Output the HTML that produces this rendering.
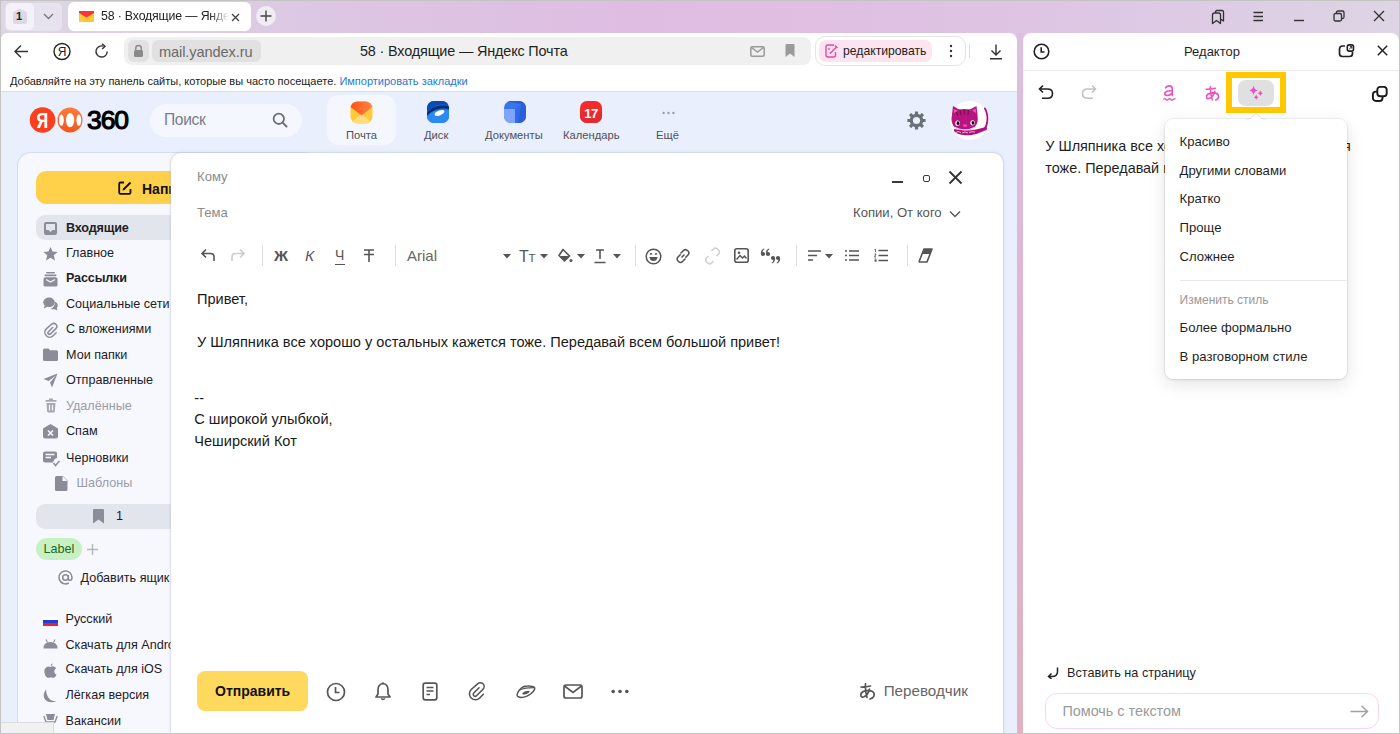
<!DOCTYPE html>
<html><head><meta charset="utf-8">
<style>
*{margin:0;padding:0;box-sizing:border-box}
html,body{width:1400px;height:734px;overflow:hidden}
body{position:relative;font-family:"Liberation Sans",sans-serif;color:#1f1f1f;
background:linear-gradient(90deg,#ddd6e6 0%,#dcc6e2 25%,#dfbde2 45%,#dfbfe2 60%,#ddcbe4 85%,#ddd5e5 100%)}
.a{position:absolute}
svg{display:block}
.t{position:absolute;white-space:nowrap;line-height:1}
</style></head><body>
<!-- outer borders -->
<div class="a" style="left:0;top:0;width:1400px;height:1px;background:#c4c4c4;z-index:50"></div>
<div class="a" style="left:0;top:0;width:1px;height:734px;background:#c4c4c4;z-index:50"></div>
<div class="a" style="left:1399px;top:0;width:1px;height:734px;background:#c6c6c6;z-index:50"></div>
<div class="a" style="left:0;top:733px;width:1400px;height:1px;background:#c6c6c6;z-index:50"></div>

<!-- TAB BAR -->
<div id="tabbar">
 <div class="a" style="left:5px;top:3px;width:57px;height:28px;background:#e7e3ee;border-radius:5px"></div>
 <div class="a" style="left:6px;top:3px;width:28px;height:27px;background:#f4f2f8;border-radius:5px"></div>
 <svg class="a" style="left:12px;top:8px" width="16" height="17" viewBox="0 0 16 17"><path d="M8 0.5 L15 4.5 V14 Q15 16 13 16 H3 Q1 16 1 14 V4.5 Z" fill="#dcd8e4"/></svg>
 <div class="t" style="left:16px;top:11px;font-size:11px;font-weight:700;color:#222">1</div>
 <svg class="a" style="left:43px;top:13px" width="11" height="7" viewBox="0 0 11 7"><path d="M1 1 L5.5 5.5 L10 1" fill="none" stroke="#777" stroke-width="1.3"/></svg>
 <div class="a" style="left:68px;top:2px;width:183px;height:29px;background:#fff;border-radius:6px"></div>
 <svg class="a" style="left:79px;top:11px" width="15" height="12" viewBox="0 0 15 12"><rect x="0" y="0" width="15" height="11" fill="#fdc93a"/><path d="M0 0 H15 V2 L7.5 6.5 L0 2 Z" fill="#f33"/></svg>
 <div class="t" style="left:101px;top:10px;font-size:12.3px;letter-spacing:-0.15px;color:#222;width:128px;overflow:hidden;-webkit-mask-image:linear-gradient(90deg,#000 85%,transparent)">58 · Входящие — Яндекс Почта</div>
 <svg class="a" style="left:231px;top:13px" width="9" height="9" viewBox="0 0 9 9"><path d="M1 1 L8 8 M8 1 L1 8" stroke="#444" stroke-width="1.3"/></svg>
 <div class="a" style="left:256px;top:6px;width:20px;height:20px;background:#f1ecf4;border-radius:50%"></div>
 <svg class="a" style="left:260px;top:10px" width="12" height="12" viewBox="0 0 12 12"><path d="M6 0.5 V11.5 M0.5 6 H11.5" stroke="#444" stroke-width="1.4"/></svg>
 <!-- window controls -->
 <svg class="a" style="left:1210px;top:9px" width="16" height="16" viewBox="0 0 16 16"><path d="M2.5 14.5 V6 Q2.5 4 4.5 4 H8.5 Q10.5 4 10.5 6 V14.5 L6.5 11.5 Z M5.5 4 V3 Q5.5 1.5 7 1.5 H12 Q13.5 1.5 13.5 3 V12 L10.5 10" fill="none" stroke="#333" stroke-width="1.3" stroke-linejoin="round"/></svg>
 <svg class="a" style="left:1253px;top:11px" width="11" height="11" viewBox="0 0 11 11"><path d="M0.5 1.5 H10 M0.5 5.5 H10 M0.5 9.5 H10" stroke="#333" stroke-width="1.3"/></svg>
 <svg class="a" style="left:1293px;top:19px" width="12" height="3" viewBox="0 0 12 3"><path d="M1 1.5 H11" stroke="#333" stroke-width="1.4"/></svg>
 <svg class="a" style="left:1333px;top:10px" width="12" height="12" viewBox="0 0 12 12"><rect x="1" y="3.5" width="7.5" height="7.5" rx="1.5" fill="none" stroke="#333" stroke-width="1.3"/><path d="M3.5 3.5 V2.5 Q3.5 1 5 1 H9.5 Q11 1 11 2.5 V7 Q11 8.5 9.5 8.5 H8.5" fill="none" stroke="#333" stroke-width="1.3"/></svg>
 <svg class="a" style="left:1373px;top:10px" width="12" height="12" viewBox="0 0 12 12"><path d="M1 1 L11 11 M11 1 L1 11" stroke="#333" stroke-width="1.3"/></svg>
</div>

<!-- BROWSER CARD -->
<div id="card" class="a" style="left:1px;top:33px;width:1016px;height:701px;background:#fff;border-radius:6px 8px 0 0;overflow:hidden">
</div>
<div id="addr">
 <!-- back -->
 <svg class="a" style="left:13px;top:44px" width="16" height="15" viewBox="0 0 16 15"><path d="M15 7.5 H2 M8 1.5 L2 7.5 L8 13.5" fill="none" stroke="#333" stroke-width="1.4"/></svg>
 <!-- Ya -->
 <svg class="a" style="left:53px;top:42px" width="18" height="19" viewBox="0 0 18 19"><circle cx="9" cy="9.5" r="8" fill="none" stroke="#222" stroke-width="1.4"/><text x="9.2" y="14.2" text-anchor="middle" font-family="Liberation Sans" font-size="12" fill="#222">Я</text></svg>
 <!-- refresh -->
 <svg class="a" style="left:94px;top:43px" width="16" height="16" viewBox="0 0 16 16"><path d="M13.2 8.5 A5.6 5.6 0 1 1 9.5 3.2" fill="none" stroke="#333" stroke-width="1.4"/><path d="M8 0.8 L11 3.3 L8.2 6" fill="none" stroke="#333" stroke-width="1.4"/></svg>
 <div class="a" style="left:124px;top:37px;width:687px;height:28px;background:#f0f0f0;border-radius:8px"></div>
 <div class="a" style="left:128px;top:40px;width:21px;height:22px;background:#e1e1e1;border-radius:6px"></div>
 <svg class="a" style="left:133px;top:44px" width="11" height="14" viewBox="0 0 11 14"><path d="M2.8 6 V4.3 A2.7 2.7 0 0 1 8.2 4.3 V6" fill="none" stroke="#8a8a8a" stroke-width="1.5"/><rect x="1" y="6" width="9" height="7" rx="1.5" fill="#8a8a8a"/></svg>
 <div class="a" style="left:152px;top:40px;width:109px;height:22px;background:#e1e1e1;border-radius:6px"></div>
 <div class="t" style="left:159px;top:44.8px;font-size:14.6px;color:#6a6a6a;letter-spacing:-0.1px">mail.yandex.ru</div>
 <div class="t" style="left:360px;top:44px;font-size:14.4px;color:#1f1f1f;letter-spacing:-0.15px">58 · Входящие — Яндекс Почта</div>
 <svg class="a" style="left:750px;top:46px" width="15" height="11" viewBox="0 0 15 11"><rect x="0.8" y="0.8" width="13.4" height="9.4" rx="1.5" fill="none" stroke="#9a9a9a" stroke-width="1.5"/><path d="M1.5 1.5 L7.5 6 L13.5 1.5" fill="none" stroke="#9a9a9a" stroke-width="1.5"/></svg>
 <svg class="a" style="left:785px;top:44px" width="10" height="13" viewBox="0 0 10 13"><path d="M0.5 1 Q0.5 0 1.5 0 H8.5 Q9.5 0 9.5 1 V13 L5 9.5 L0.5 13 Z" fill="#9a9a9a"/></svg>
 <div class="a" style="left:815px;top:36px;width:151px;height:30px;border:1px solid #e4e4e4;border-radius:10px;background:#fff"></div>
 <div class="a" style="left:819px;top:40px;width:113px;height:22px;background:linear-gradient(90deg,#fbe3f2,#fde6ee);border-radius:7px"></div>
 <svg class="a" style="left:825px;top:44px" width="13" height="14" viewBox="0 0 13 14"><path d="M9 1 H3 Q1 1 1 3 V11 Q1 13 3 13 H8.5 Q10.5 13 10.5 11 V8" fill="none" stroke="#e8489e" stroke-width="1.4"/><path d="M6 8.5 L11.5 3 M10 1.5 L12.5 4" fill="none" stroke="#e8489e" stroke-width="1.4"/><circle cx="4" cy="5" r="0.9" fill="#e8489e"/><circle cx="5.5" cy="9" r="0.9" fill="#e8489e"/></svg>
 <div class="t" style="left:843px;top:45px;font-size:12.2px;color:#222">редактировать</div>
 <svg class="a" style="left:949px;top:44px" width="4" height="14" viewBox="0 0 4 14"><circle cx="2" cy="2" r="1.2" fill="#333"/><circle cx="2" cy="7" r="1.2" fill="#333"/><circle cx="2" cy="12" r="1.2" fill="#333"/></svg>
 <div class="a" style="left:969px;top:44px;width:1px;height:14px;background:#ddd"></div>
 <svg class="a" style="left:989px;top:44px" width="14" height="16" viewBox="0 0 14 16"><path d="M7 0.5 V11 M2.5 6.5 L7 11 L11.5 6.5 M1 14.8 H13" fill="none" stroke="#333" stroke-width="1.4"/></svg>
 <div class="t" style="left:10px;top:76px;font-size:11px;color:#222">Добавляйте на эту панель сайты, которые вы часто посещаете. <span style="color:#1f79d6">Импортировать закладки</span></div>
</div>
<!-- PAGE -->
<div class="a" style="left:1px;top:91px;width:1016px;height:1px;background:#d9dee9"></div>
<div id="page" class="a" style="left:1px;top:92px;width:1016px;height:642px;background:#e9effc;overflow:hidden">
</div>
<div id="hdr">
 <svg class="a" style="left:29px;top:107px" width="56" height="26" viewBox="0 0 56 26">
  <circle cx="13.5" cy="13" r="12.8" fill="#fc3f1d"/>
  <path d="M18.2 6 H13.3 C10 6 7.9 8 7.9 10.5 C7.9 12.6 9 13.9 10.8 14.6 L7.7 21 H10.9 L13.6 15 H15.4 V21 H18.2 Z M15.4 8.3 V12.8 H13.6 C11.6 12.8 10.7 11.8 10.7 10.5 C10.7 9.1 11.6 8.3 13.4 8.3 Z" fill="#fff" fill-rule="evenodd"/>
  <defs><linearGradient id="og" x1="0" y1="0" x2="0" y2="1"><stop offset="0" stop-color="#ff7a3c"/><stop offset="1" stop-color="#f7541c"/></linearGradient><clipPath id="oc"><circle cx="41" cy="13" r="12.3"/></clipPath></defs>
  <circle cx="41" cy="13" r="12.5" fill="url(#og)"/>
  <g clip-path="url(#oc)" fill="#fff"><ellipse cx="41.1" cy="13.2" rx="4.1" ry="7.1"/><ellipse cx="32.4" cy="13.2" rx="2.4" ry="5.6"/><ellipse cx="49.8" cy="13.2" rx="2.4" ry="5.6"/></g>
 </svg>
 <div class="t" style="left:87px;top:107.1px;font-size:26.5px;font-weight:400;color:#000;letter-spacing:-1.1px;-webkit-text-stroke:1.1px #000">360</div>
 <div class="a" style="left:150px;top:104px;width:152px;height:33px;background:#f5f7fe;border-radius:17px"></div>
 <div class="t" style="left:164px;top:111.6px;font-size:15.6px;letter-spacing:-0.35px;color:#7a7e88">Поиск</div>
 <svg class="a" style="left:272px;top:112px" width="16" height="16" viewBox="0 0 16 16"><circle cx="6.8" cy="6.8" r="5.2" fill="none" stroke="#6b6f78" stroke-width="1.8"/><path d="M10.6 10.6 L14.5 14.5" stroke="#6b6f78" stroke-width="2" stroke-linecap="round"/></svg>
 <!-- apps -->
 <div class="a" style="left:327px;top:95px;width:69px;height:50px;background:#f5f7fe;border-radius:12px"></div>
 <svg class="a" style="left:350px;top:101px" width="23" height="23" viewBox="0 0 23 23"><defs><clipPath id="mc"><rect x="0.5" y="0.5" width="22" height="22" rx="7"/></clipPath><linearGradient id="mr" x1="0" y1="0" x2="1" y2="0"><stop offset="0" stop-color="#ff4d12"/><stop offset="1" stop-color="#ff8a4a"/></linearGradient></defs><g clip-path="url(#mc)"><rect width="23" height="23" fill="#ffc93a"/><path d="M0 23 L11.5 12.5 L23 23Z" fill="#ffdc7e"/><path d="M0 0 H23 V5.5 L11.5 14.5 L0 5.5Z" fill="url(#mr)"/></g></svg>
 <svg class="a" style="left:427px;top:101px" width="22" height="22" viewBox="0 0 22 22"><defs><clipPath id="dc"><rect width="22" height="22" rx="7"/></clipPath></defs><g clip-path="url(#dc)"><rect width="22" height="22" fill="#1461d8"/><path d="M0 11 C5 4 14 2 22 4 V0 H0Z" fill="#0b4bb0"/><path d="M0 12 C4 6 12 3 22 5 V8 C14 6 6 8 0 15Z" fill="#062d6e"/><path d="M0 15 C6 9 14 7 22 9 V22 H0Z" fill="#2a8af2"/></g><ellipse cx="12.5" cy="12" rx="5.2" ry="2.3" transform="rotate(-22 12.5 12)" fill="#fff"/></svg>
 <svg class="a" style="left:504px;top:101px" width="22" height="22" viewBox="0 0 22 22"><defs><clipPath id="cc"><rect width="22" height="22" rx="7"/></clipPath></defs><g clip-path="url(#cc)"><rect width="22" height="22" fill="#3a74ec"/><path d="M0 0 H22 V22 H14 L17 3Z" fill="#2b5fd3"/><path d="M0 8 L11 8 L11 22 H0Z" fill="#7ea6f7"/><path d="M11 8 L17 3 L14 22 H11Z" fill="#2f6af0"/></g></svg>
 <svg class="a" style="left:580px;top:101px" width="22" height="22" viewBox="0 0 22 22"><defs><clipPath id="kc"><rect width="22" height="22" rx="7"/></clipPath></defs><g clip-path="url(#kc)"><rect width="22" height="22" fill="#f52a2a"/><rect y="11" width="22" height="11" fill="#e42a2f"/></g><text x="11" y="16.5" text-anchor="middle" font-family="Liberation Sans" font-weight="700" font-size="13" fill="#fff" letter-spacing="-0.6">17</text></svg>
 <svg class="a" style="left:662px;top:111px" width="13" height="4" viewBox="0 0 13 4"><circle cx="1.6" cy="2" r="1.2" fill="#9aa0aa"/><circle cx="6.5" cy="2" r="1.2" fill="#9aa0aa"/><circle cx="11.4" cy="2" r="1.2" fill="#9aa0aa"/></svg>
 <div class="t" style="left:346px;top:130px;font-size:11.2px;color:#4d5058">Почта</div>
 <div class="t" style="left:424px;top:130px;font-size:11.2px;color:#4d5058">Диск</div>
 <div class="t" style="left:485px;top:130px;font-size:11.2px;color:#4d5058">Документы</div>
 <div class="t" style="left:563px;top:130px;font-size:11.2px;color:#4d5058">Календарь</div>
 <div class="t" style="left:656px;top:130px;font-size:11.2px;color:#4d5058">Ещё</div>
 <!-- gear -->
 <svg class="a" style="left:907px;top:110.5px" width="19" height="19" viewBox="0 0 19 19"><g fill="#6b6f76" transform="translate(9.5 9.5)"><rect x="-1.6" y="-9.1" width="3.2" height="3.6" rx="0.5" transform="rotate(0)"/><rect x="-1.6" y="-9.1" width="3.2" height="3.6" rx="0.5" transform="rotate(45)"/><rect x="-1.6" y="-9.1" width="3.2" height="3.6" rx="0.5" transform="rotate(90)"/><rect x="-1.6" y="-9.1" width="3.2" height="3.6" rx="0.5" transform="rotate(135)"/><rect x="-1.6" y="-9.1" width="3.2" height="3.6" rx="0.5" transform="rotate(180)"/><rect x="-1.6" y="-9.1" width="3.2" height="3.6" rx="0.5" transform="rotate(225)"/><rect x="-1.6" y="-9.1" width="3.2" height="3.6" rx="0.5" transform="rotate(270)"/><rect x="-1.6" y="-9.1" width="3.2" height="3.6" rx="0.5" transform="rotate(315)"/></g><circle cx="9.5" cy="9.5" r="5.2" fill="none" stroke="#6b6f76" stroke-width="3.2"/></svg>
 <!-- avatar -->
 <div class="a" style="left:950px;top:101px;width:39px;height:39px;background:#fff;border-radius:50%"></div>
 <svg class="a" style="left:950px;top:101px" width="39" height="39" viewBox="0 0 39 39">
  <path d="M33.5 28 C37.5 22 37.5 14 34.2 8 C33.5 6.5 35.2 5.8 36 7.5 C39.2 14 39.2 22.5 35.5 28.5Z" fill="#b0107a"/>
  <path d="M4 30 C9 35.5 22 35.5 30 31.5 L36.5 29 C38 26.5 36 25 33 26.8 L26 28.5 C18 30 10 29.5 4 28Z" fill="#b0107a"/>
  <path d="M1.5 18 C1.5 11 6 8 14.5 8 C23 8 27.8 11 27.8 18 C27.8 25 22.5 29.5 14.5 29.5 C6.5 29.5 1.5 25 1.5 18Z" fill="#b8147f"/>
  <path d="M1.8 15 L3 5 L10.5 9.2Z M19 9 L26.5 5 L27.6 15Z" fill="#b8147f"/>
  <path d="M3.6 8 L8 9.5 L4 12Z M25.8 7.5 L22 9.5 L26 12Z" fill="#e55bb3"/>
  <path d="M10 9 L11 14 M14.2 8.5 L14.4 13.5 M18.5 9 L18 14 M6.5 11 L8 15" stroke="#7d0a55" stroke-width="1.1"/>
  <ellipse cx="7.6" cy="22.2" rx="2.3" ry="2.6" fill="#fff"/><ellipse cx="8" cy="22.2" rx="1.4" ry="1.9" fill="#111"/>
  <ellipse cx="22.6" cy="21.8" rx="2.3" ry="2.6" fill="#fff"/><ellipse cx="23" cy="21.8" rx="1.4" ry="1.9" fill="#111"/>
  <ellipse cx="15" cy="24.6" rx="2.2" ry="1.4" fill="#ff3fb8"/>
  <path d="M5 26.5 Q15 31.5 26 26" stroke="#f6d6ec" stroke-width="1.3" fill="none"/>
  <path d="M6 31.5 Q8 29.5 11 31.5 M12 32 Q15 30 18 32 M19 31.5 Q22 30 25 31" stroke="#f0c8e2" stroke-width="0.9" fill="none"/>
 </svg>
</div>
<!-- SIDEBAR -->
<div id="sb" class="a" style="left:18px;top:153px;width:300px;height:600px;background:#f7f8fe;border-radius:13px;box-shadow:0 0 0 1px rgba(190,198,225,.45)">
</div>
<div id="sbc" style="color:#1f2025">
 <div class="a" style="left:36px;top:171px;width:150px;height:33px;background:#ffd04a;border-radius:10px"></div>
 <svg class="a" style="left:118px;top:181px" width="14" height="14" viewBox="0 0 14 14"><path d="M6 1.5 H2.5 Q1.2 1.5 1.2 2.8 V11.5 Q1.2 12.8 2.5 12.8 H11.2 Q12.5 12.8 12.5 11.5 V8" fill="none" stroke="#111" stroke-width="1.8"/><path d="M5.5 8.5 L12.5 1.5" stroke="#111" stroke-width="1.8"/><path d="M4.6 9.4 L5 7.3 L6.7 9 Z" fill="#111"/></svg>
 <div class="t" style="left:142px;top:182px;font-size:14px;font-weight:700;color:#111">Написать</div>
 <div class="a" style="left:36px;top:215px;width:150px;height:25px;background:#e3e5ed;border-radius:9px"></div>
 <!-- icons -->
 <svg class="a" style="left:44px;top:222px" width="13" height="13" viewBox="0 0 13 13"><path d="M2 0 H11 Q13 0 13 2 V11 Q13 13 11 13 H2 Q0 13 0 11 V2 Q0 0 2 0Z M2 2 V8 H4.5 L6.5 10 L8.5 8 H11 V2Z" fill="#8a8d97" fill-rule="evenodd"/></svg>
 <svg class="a" style="left:43px;top:247px" width="15" height="14" viewBox="0 0 15 14"><path d="M7.5 0 L9.6 4.6 L14.6 5 L10.8 8.3 L12 13.5 L7.5 10.8 L3 13.5 L4.2 8.3 L0.4 5 L5.4 4.6Z" fill="#8a8d97"/></svg>
 <svg class="a" style="left:43px;top:272px" width="15" height="15" viewBox="0 0 15 15"><rect x="3" y="0" width="9" height="1.6" rx=".8" fill="#8a8d97"/><rect x="1.5" y="2.6" width="12" height="1.6" rx=".8" fill="#8a8d97"/><path d="M0.5 7 Q0.5 5.2 2.3 5.2 H12.7 Q14.5 5.2 14.5 7 V13 Q14.5 14.6 12.7 14.6 H2.3 Q0.5 14.6 0.5 13Z" fill="#8a8d97"/><path d="M3 7.5 L7.5 10 L12 7.5" fill="none" stroke="#f6f7fd" stroke-width="1.3"/></svg>
 <svg class="a" style="left:43px;top:297px" width="15" height="14" viewBox="0 0 15 14"><ellipse cx="6" cy="5.3" rx="5.8" ry="4.8" fill="#8a8d97"/><path d="M1.5 8.5 L1 11.5 L4.5 9.5Z" fill="#8a8d97"/><path d="M12.2 4.8 Q14.8 6 14.8 8.3 Q14.8 10 13.8 11 L14.4 13.6 L11.5 12.2 Q9.5 12.6 7.8 11.4 Q11.8 10.6 12.2 4.8Z" fill="#8a8d97"/></svg>
 <svg class="a" style="left:43px;top:322px" width="16" height="17" viewBox="0 0 18 21"><path d="M15.3 13.3 L11.7 17 A6 6 0 0 1 3.2 8.5 L9.6 2.8 A3.8 3.8 0 0 1 15 8.2 L8.5 14.7 A1.9 1.9 0 0 1 5.8 12 L11 6.8" fill="none" stroke="#8a8d97" stroke-width="1.9" stroke-linecap="round"/></svg>
 <svg class="a" style="left:43px;top:348px" width="15" height="13" viewBox="0 0 15 13"><path d="M0 2 Q0 0.5 1.5 0.5 H5.5 L7 2.2 H13.5 Q15 2.2 15 3.7 V11.5 Q15 13 13.5 13 H1.5 Q0 13 0 11.5Z" fill="#8a8d97"/></svg>
 <svg class="a" style="left:43px;top:373px" width="15" height="15" viewBox="0 0 15 15"><path d="M14.5 0.5 L0.5 6 L5.5 8 L13 2.5 L7 9.5 L9 14.5Z" fill="#8a8d97"/></svg>
 <svg class="a" style="left:45px;top:398px" width="12" height="15" viewBox="0 0 12 15"><path d="M4 0.5 H8 V2 H11.5 V3.8 H0.5 V2 H4Z" fill="#a5a8b0"/><path d="M1.5 5 H10.5 L9.8 13.2 Q9.6 14.6 8.2 14.6 H3.8 Q2.4 14.6 2.2 13.2Z" fill="#a5a8b0"/><path d="M4.5 6.8 V12.5 M7.5 6.8 V12.5" stroke="#f6f7fd" stroke-width="1.2"/></svg>
 <svg class="a" style="left:43px;top:424px" width="15" height="15" viewBox="0 0 15 15"><path d="M7.5 0 L15 4.5 V12.5 Q15 14.5 13 14.5 H2 Q0 14.5 0 12.5 V4.5Z" fill="#8a8d97"/><path d="M5 6.5 L10 11.5 M10 6.5 L5 11.5" stroke="#f6f7fd" stroke-width="1.6"/></svg>
 <svg class="a" style="left:43px;top:451px" width="17" height="17" viewBox="0 0 17 17"><path d="M2 0.5 H12 Q14 0.5 14 2.5 V7 Q11 7.5 10 11.5 H2 Q0 11.5 0 9.5 V2.5 Q0 0.5 2 0.5Z" fill="#8a8d97"/><path d="M2.5 3.5 H11.5 M2.5 6.5 H8" stroke="#f6f7fd" stroke-width="1.3"/><path d="M10.5 12 L12.5 14.5 L16.5 10" fill="none" stroke="#8a8d97" stroke-width="1.5"/></svg>
 <svg class="a" style="left:55px;top:476px" width="13" height="15" viewBox="0 0 13 15"><path d="M1.5 0 H8 L12.5 4.5 V13.5 Q12.5 15 11 15 H1.5 Q0 15 0 13.5 V1.5 Q0 0 1.5 0Z" fill="#8a8d97"/><path d="M7.5 0 V5 H12.5" fill="#f6f7fd"/></svg>
 <div class="t" style="left:66px;top:221.6px;font-size:12.6px;font-weight:700;letter-spacing:-0.15px">Входящие</div>
 <div class="t" style="left:66px;top:246.6px;font-size:12.6px">Главное</div>
 <div class="t" style="left:66px;top:272.1px;font-size:12.6px;font-weight:700;letter-spacing:-0.15px">Рассылки</div>
 <div class="t" style="left:66px;top:297.7px;font-size:12.6px">Социальные сети</div>
 <div class="t" style="left:66px;top:323.3px;font-size:12.6px">С вложениями</div>
 <div class="t" style="left:66px;top:348.8px;font-size:12.6px">Мои папки</div>
 <div class="t" style="left:66px;top:374.3px;font-size:12.6px">Отправленные</div>
 <div class="t" style="left:66px;top:399.8px;font-size:12.6px;color:#999ca4">Удалённые</div>
 <div class="t" style="left:66px;top:425.3px;font-size:12.6px">Спам</div>
 <div class="t" style="left:66px;top:451.5px;font-size:12.6px">Черновики</div>
 <div class="t" style="left:76.5px;top:476.7px;font-size:12.6px;color:#999ca4">Шаблоны</div>
 <div class="a" style="left:36px;top:504px;width:150px;height:25px;background:#e3e5ed;border-radius:9px"></div>
 <svg class="a" style="left:93px;top:509px" width="11" height="15" viewBox="0 0 11 15"><path d="M0 1.2 Q0 0 1.2 0 H9.8 Q11 0 11 1.2 V14.5 L5.5 10.5 L0 14.5Z" fill="#8a8d97"/></svg>
 <div class="t" style="left:116px;top:509.5px;font-size:12.6px">1</div>
 <div class="a" style="left:36px;top:538px;width:46px;height:22px;background:#c8f1c3;border-radius:11px"></div>
 <div class="t" style="left:43.5px;top:543px;font-size:12.6px;color:#1e6a21">Label</div>
 <svg class="a" style="left:87px;top:544px" width="11" height="11" viewBox="0 0 11 11"><path d="M5.5 0 V11 M0 5.5 H11" stroke="#b3b6bd" stroke-width="1.4"/></svg>
 <svg class="a" style="left:58px;top:570px" width="15" height="15" viewBox="0 0 15 15"><circle cx="7.5" cy="7.5" r="2.8" fill="none" stroke="#8a8d97" stroke-width="1.5"/><path d="M10.3 5 V8.5 Q10.3 10.3 12 10.3 Q14 10.3 14 7.5 A6.5 6.5 0 1 0 10.8 13" fill="none" stroke="#8a8d97" stroke-width="1.5"/></svg>
 <div class="t" style="left:80.5px;top:572.3px;font-size:12.6px">Добавить ящик</div>
 <svg class="a" style="left:43px;top:616.5px" width="15" height="9" viewBox="0 0 15 9"><rect width="15" height="3" fill="#fff"/><rect y="3" width="15" height="3" fill="#1d3fd6"/><rect y="6" width="15" height="3" fill="#e3262e"/></svg>
 <svg class="a" style="left:43px;top:639px" width="15" height="10" viewBox="0 0 15 10"><path d="M0.5 9.5 Q0.5 3 7.5 3 Q14.5 3 14.5 9.5Z" fill="#8a8d97"/><path d="M3 0.5 L4.5 3.5 M12 0.5 L10.5 3.5" stroke="#8a8d97" stroke-width="1.1"/></svg>
 <svg class="a" style="left:44px;top:663px" width="13" height="15" viewBox="0 0 13 15"><path d="M6.5 4 Q8.5 2.8 10.5 3.8 Q11.8 4.5 12.2 5.3 Q10 6.5 10.3 9 Q10.7 11 12.5 11.6 Q11.5 14.8 9.5 14.8 Q8.5 14.8 6.8 14.2 Q5.2 14.8 4 14.8 Q2 14.8 0.8 11 Q-0.5 6.5 2 4.5 Q4 3 6.5 4Z M6.5 3.2 Q6.6 1 8.8 0.2 Q8.8 2.5 6.5 3.2Z" fill="#8a8d97"/></svg>
 <svg class="a" style="left:43px;top:689px" width="14" height="14" viewBox="0 0 14 14"><path d="M3 0.5 Q-1.5 6 2.5 11 Q6 14.5 13.5 12.5 Q6.5 12 4.5 7 Q3 3.5 3 0.5Z" fill="#8a8d97"/></svg>
 <svg class="a" style="left:43px;top:713px" width="15" height="14" viewBox="0 0 15 14"><path d="M3 1 H12 L10.5 7 H4.5Z" fill="#8a8d97"/><path d="M0.8 3 L3 9 H12 L14.2 3" fill="none" stroke="#8a8d97" stroke-width="1.3"/><path d="M7.5 9 V13" stroke="#8a8d97" stroke-width="1.5"/></svg>
 <div class="t" style="left:65.5px;top:612.5px;font-size:12.6px">Русский</div>
 <div class="t" style="left:65.5px;top:638.5px;font-size:12.6px">Скачать для Android</div>
 <div class="t" style="left:65.5px;top:663.4px;font-size:12.6px">Скачать для iOS</div>
 <div class="t" style="left:65.5px;top:689px;font-size:12.6px">Лёгкая версия</div>
 <div class="t" style="left:65.5px;top:715px;font-size:12.6px">Вакансии</div>
</div>
<!-- bottom-left overlay -->
<div class="a" style="left:1px;top:722px;width:53px;height:12px;background:#f1f1f1;border-top:1px solid #dcdcdc;border-right:1px solid #dcdcdc"></div>
<!-- COMPOSE -->
<div id="cmp" class="a" style="left:171px;top:153px;width:832px;height:600px;background:#fff;border-radius:10px;box-shadow:0 0 0 1px rgba(190,198,225,.38),0 0 4px rgba(60,70,110,.1)">
</div>
<div id="cmpc">
 <div class="t" style="left:197px;top:170px;font-size:13.1px;color:#8b8b8b">Кому</div>
 <div class="t" style="left:197px;top:206.2px;font-size:13.1px;color:#8b8b8b">Тема</div>
 <div class="a" style="left:891.5px;top:181px;width:11px;height:1.8px;background:#3a3a3a"></div>
 <div class="a" style="left:922.5px;top:174.5px;width:7.5px;height:7.5px;border:1.7px solid #3a3a3a;border-radius:2px"></div>
 <svg class="a" style="left:948px;top:170px" width="15" height="15" viewBox="0 0 15 15"><path d="M1.5 1.5 L13.5 13.5 M13.5 1.5 L1.5 13.5" stroke="#333" stroke-width="1.8"/></svg>
 <div class="t" style="left:853px;top:206.4px;font-size:13.1px;color:#555">Копии, От кого</div>
 <svg class="a" style="left:949px;top:210px" width="12" height="8" viewBox="0 0 12 8"><path d="M1 1.5 L6 6.5 L11 1.5" fill="none" stroke="#555" stroke-width="1.4"/></svg>
 <!-- toolbar -->
 <svg class="a" style="left:200px;top:248px" width="16" height="14" viewBox="0 0 16 14"><path d="M14 13 V9 Q14 5.5 10.5 5.5 H2 M6 1.5 L2 5.5 L6 9.5" fill="none" stroke="#555" stroke-width="1.6"/></svg>
 <svg class="a" style="left:230px;top:248px" width="16" height="14" viewBox="0 0 16 14"><path d="M2 13 V9 Q2 5.5 5.5 5.5 H14 M10 1.5 L14 5.5 L10 9.5" fill="none" stroke="#ccc" stroke-width="1.6"/></svg>
 <div class="a" style="left:262px;top:245px;width:1px;height:21px;background:#ddd"></div>
 <div class="t" style="left:274px;top:248px;font-size:15.5px;font-weight:700;color:#555">Ж</div>
 <div class="t" style="left:305px;top:248px;font-size:15.5px;font-style:italic;color:#555">К</div>
 <div class="t" style="left:335px;top:248px;font-size:14px;color:#555">Ч</div>
 <div class="a" style="left:335px;top:263.5px;width:10px;height:1.5px;background:#555"></div>
 <svg class="a" style="left:363px;top:249px" width="12" height="14" viewBox="0 0 12 14"><path d="M1 1 H11 M6 1 V13 M1 5.5 H11" fill="none" stroke="#555" stroke-width="1.6"/></svg>
 <div class="a" style="left:395px;top:245px;width:1px;height:21px;background:#ddd"></div>
 <div class="t" style="left:407px;top:248.3px;font-size:15px;color:#666">Arial</div>
 <svg class="a" style="left:503px;top:254px" width="8" height="5" viewBox="0 0 8 5"><path d="M0 0 H8 L4 4.5Z" fill="#555"/></svg>
 <div class="t" style="left:519px;top:249px;font-size:16px;color:#555">T</div>
 <div class="t" style="left:528.5px;top:253px;font-size:11.5px;color:#555">T</div>
 <svg class="a" style="left:540px;top:254px" width="8" height="5" viewBox="0 0 8 5"><path d="M0 0 H8 L4 4.5Z" fill="#555"/></svg>
 <svg class="a" style="left:558px;top:248px" width="15" height="15" viewBox="0 0 15 15"><path d="M5 1.5 L11.5 8 L6.5 13 L1 7.5 Z" fill="none" stroke="#555" stroke-width="1.6" stroke-linejoin="round"/><path d="M2 8 H11 L6.5 12.5Z" fill="#555"/><circle cx="13" cy="12.5" r="1.5" fill="#555"/></svg>
 <svg class="a" style="left:577px;top:254px" width="8" height="5" viewBox="0 0 8 5"><path d="M0 0 H8 L4 4.5Z" fill="#555"/></svg>
 <svg class="a" style="left:594px;top:249px" width="12" height="15" viewBox="0 0 12 15"><path d="M2 1 H10 M6 1 V10 M0.5 13.5 H11.5" fill="none" stroke="#555" stroke-width="1.6"/></svg>
 <svg class="a" style="left:613px;top:254px" width="8" height="5" viewBox="0 0 8 5"><path d="M0 0 H8 L4 4.5Z" fill="#555"/></svg>
 <div class="a" style="left:634.5px;top:245px;width:1px;height:21px;background:#ddd"></div>
 <svg class="a" style="left:645px;top:248px" width="17" height="17" viewBox="0 0 17 17"><circle cx="8.5" cy="8.5" r="7.3" fill="none" stroke="#555" stroke-width="1.5"/><path d="M4.5 9 H12.5 Q12.2 13 8.5 13 Q4.8 13 4.5 9Z" fill="#555"/><path d="M5 6.5 Q6 5 7 6.5 M10 6.5 Q11 5 12 6.5" fill="none" stroke="#555" stroke-width="1.3"/></svg>
 <svg class="a" style="left:675px;top:248px" width="16" height="16" viewBox="0 0 16 16"><path d="M7 9 L9 7 M6 5 L8.5 2.5 Q10.5 0.5 12.8 2.8 Q15 5 13 7 L10.8 9.2 M10 11 L7.5 13.5 Q5.5 15.5 3.2 13.2 Q1 11 3 9 L5.2 6.8" fill="none" stroke="#555" stroke-width="1.6" stroke-linecap="round"/></svg>
 <svg class="a" style="left:703px;top:247px" width="19" height="18" viewBox="0 0 19 18"><path d="M9 3.5 L10.5 2 Q12.5 0 15 2.5 Q17.5 5 15.5 7 L14 8.5 M5 9.5 L3.5 11 Q1.5 13 4 15.5 Q6.5 18 8.5 16 L10 14.5" fill="none" stroke="#d0d0d0" stroke-width="1.6" stroke-linecap="round"/></svg>
 <svg class="a" style="left:734px;top:248px" width="15" height="15" viewBox="0 0 15 15"><rect x="0.8" y="0.8" width="13.4" height="13.4" rx="2" fill="none" stroke="#555" stroke-width="1.6"/><path d="M2.5 11.5 L6 7.5 L8.5 10 L10.5 8 L12.5 10.5" fill="none" stroke="#555" stroke-width="1.4"/><circle cx="5" cy="4.8" r="1.3" fill="#555"/></svg>
 <svg class="a" style="left:760px;top:248px" width="21" height="16" viewBox="0 0 21 16"><g fill="#555"><circle cx="3" cy="6" r="2.1"/><path d="M0.8 5.5 Q1 1.5 4 0.5 L4.4 1.3 Q2.5 2.3 2.5 4.5Z"/><circle cx="8" cy="6" r="2.1"/><path d="M5.8 5.5 Q6 1.5 9 0.5 L9.4 1.3 Q7.5 2.3 7.5 4.5Z"/><circle cx="13" cy="10" r="2.1"/><path d="M15.2 10.5 Q15 14.5 12 15.5 L11.6 14.7 Q13.5 13.7 13.5 11.5Z"/><circle cx="18" cy="10" r="2.1"/><path d="M20.2 10.5 Q20 14.5 17 15.5 L16.6 14.7 Q18.5 13.7 18.5 11.5Z"/></g></svg>
 <div class="a" style="left:796px;top:245px;width:1px;height:21px;background:#ddd"></div>
 <svg class="a" style="left:808px;top:250px" width="13" height="11" viewBox="0 0 13 11"><path d="M0 1 H13 M0 5.5 H9 M0 10 H5" stroke="#555" stroke-width="1.5"/></svg>
 <svg class="a" style="left:825px;top:254px" width="8" height="5" viewBox="0 0 8 5"><path d="M0 0 H8 L4 4.5Z" fill="#555"/></svg>
 <svg class="a" style="left:845px;top:250px" width="14" height="11" viewBox="0 0 14 11"><path d="M0 1 H2 M0 5.5 H2 M0 10 H2 M4 1 H14 M4 5.5 H14 M4 10 H14" stroke="#555" stroke-width="1.6"/></svg>
 <svg class="a" style="left:874px;top:249px" width="14" height="13" viewBox="0 0 14 13"><path d="M4.5 1.5 H14 M4.5 6.5 H14 M4.5 11.5 H14" stroke="#555" stroke-width="1.6"/><path d="M0.5 0.5 H1.5 V3 M0.5 5 H2 L0.5 8 H2 M0.5 10 H2 V13 H0.5 M0.5 11.5 H2" fill="none" stroke="#555" stroke-width="0.9"/></svg>
 <div class="a" style="left:906.5px;top:245px;width:1px;height:21px;background:#ddd"></div>
 <svg class="a" style="left:918px;top:248px" width="15" height="15" viewBox="0 0 15 15"><path d="M6 1 H14 L9 14 H2 Q1 14 1.3 13 Z" fill="none" stroke="#555" stroke-width="1.6" stroke-linejoin="round"/><path d="M6 1 H14 L12 6 H4Z" fill="#555"/></svg>
 <!-- body -->
 <div style="color:#1a1a1a;font-size:14.56px">
  <div class="t" style="left:197px;top:292.2px">Привет,</div>
  <div class="t" style="left:197px;top:335.1px">У Шляпника все хорошо у остальных кажется тоже. Передавай всем большой привет!</div>
  <div class="t" style="left:194.3px;top:390.7px">--</div>
  <div class="t" style="left:194.3px;top:412.3px">С широкой улыбкой,</div>
  <div class="t" style="left:194.3px;top:433.9px">Чеширский Кот</div>
 </div>
 <!-- bottom -->
 <div class="a" style="left:197px;top:671px;width:111px;height:40px;background:#ffd95e;border-radius:8px"></div>
 <div class="t" style="left:215px;top:683.8px;font-size:14px;font-weight:700;color:#111">Отправить</div>
 <svg class="a" style="left:326px;top:682px" width="20" height="20" viewBox="0 0 20 20"><circle cx="10" cy="10" r="8.5" fill="none" stroke="#555" stroke-width="1.7"/><path d="M9.5 5 V10.5 H13.5" fill="none" stroke="#555" stroke-width="1.7"/></svg>
 <svg class="a" style="left:375px;top:682px" width="16" height="19" viewBox="0 0 16 19"><path d="M8 1.5 Q13 2 13 8 V12 L15 15 H1 L3 12 V8 Q3 2 8 1.5Z" fill="none" stroke="#555" stroke-width="1.7" stroke-linejoin="round"/><path d="M6 16.5 Q8 19 10 16.5" fill="#555" stroke="#555" stroke-width="1.2"/><circle cx="8" cy="1.3" r="1" fill="#555"/></svg>
 <svg class="a" style="left:422px;top:682px" width="16" height="19" viewBox="0 0 16 19"><rect x="1.2" y="1.2" width="13.6" height="16.6" rx="2" fill="none" stroke="#555" stroke-width="1.7"/><path d="M4.5 5.5 H11.5 M4.5 9 H11.5 M4.5 12.5 H8" stroke="#555" stroke-width="1.6"/></svg>
 <svg class="a" style="left:468px;top:681px" width="18" height="21" viewBox="0 0 18 21"><path d="M15.3 13.3 L11.7 17 A6 6 0 0 1 3.2 8.5 L9.6 2.8 A3.8 3.8 0 0 1 15 8.2 L8.5 14.7 A1.9 1.9 0 0 1 5.8 12 L11 6.8" fill="none" stroke="#555" stroke-width="1.6" stroke-linecap="round"/></svg>
 <svg class="a" style="left:516px;top:684px" width="20" height="15" viewBox="0 0 20 15"><path d="M1.3 11.8 Q0.5 9.5 3.5 6 Q6.5 2 11.5 2 Q16.8 1.8 18.5 3.6 Q19.6 5.5 15.2 9.5 Q10.5 13.3 5.2 13.4 Q2 13.4 1.3 11.8Z" fill="none" stroke="#555" stroke-width="1.5" stroke-linejoin="round"/><path d="M3.5 6 Q9 3.5 18.5 3.6" fill="none" stroke="#555" stroke-width="1.2"/><ellipse cx="10" cy="8.6" rx="3.8" ry="1.4" transform="rotate(-20 10 8.6)" fill="#555"/></svg>
 <svg class="a" style="left:563px;top:684px" width="20" height="15" viewBox="0 0 20 15"><rect x="1" y="1" width="18" height="13" rx="2" fill="none" stroke="#555" stroke-width="1.7"/><path d="M1.5 2 L10 8.5 L18.5 2" fill="none" stroke="#555" stroke-width="1.6"/></svg>
 <svg class="a" style="left:611px;top:689px" width="18" height="5" viewBox="0 0 18 5"><circle cx="2.2" cy="2.5" r="1.8" fill="#555"/><circle cx="9" cy="2.5" r="1.8" fill="#555"/><circle cx="15.8" cy="2.5" r="1.8" fill="#555"/></svg>
 <svg class="a" style="left:859px;top:683px" width="17" height="17" viewBox="0 0 17 17"><path d="M2 4 Q6.5 4.3 11.5 3 M6.5 0.8 Q6 8 8 14.5 M10.5 6.2 Q9 12 5 13.8 Q1.8 14.8 1.8 12 Q1.8 8 8.5 7.6 Q15.2 7.5 15.2 11.5 Q15.2 14.8 11 16" fill="none" stroke="#555" stroke-width="1.7" stroke-linecap="round"/></svg>
 <div class="t" style="left:883.7px;top:683.1px;font-size:15.2px;color:#666">Переводчик</div>
</div>

<!-- pink strip -->
<div class="a" style="left:1017px;top:33px;width:6px;height:701px;background:linear-gradient(180deg,#dcc0e2,#dfb4d4 45%,#e0b3bd)"></div>

<!-- SIDE PANEL -->
<div id="side" class="a" style="left:1023px;top:33px;width:376px;height:701px;background:#fff;border-radius:8px 8px 0 0;overflow:hidden">
</div>
<div id="sidec" style="color:#1f1f1f">
 <svg class="a" style="left:1033px;top:43px" width="17" height="17" viewBox="0 0 17 17"><circle cx="8.5" cy="8.5" r="7.3" fill="none" stroke="#222" stroke-width="1.6"/><path d="M8.2 4.3 V9 H11.5" fill="none" stroke="#222" stroke-width="1.6"/></svg>
 <div class="t" style="left:1184px;top:44.5px;font-size:13px;color:#1f1f1f">Редактор</div>
 <svg class="a" style="left:1338px;top:43px" width="17" height="15" viewBox="0 0 17 15"><path d="M7 3 H4.5 Q1.5 3 1.5 6 V10.5 Q1.5 13.5 4.5 13.5 H11.5 Q14.5 13.5 14.5 10.5 V9" fill="none" stroke="#222" stroke-width="1.7"/><rect x="9.3" y="1.9" width="6.2" height="6.2" rx="1.8" fill="#fff" stroke="#222" stroke-width="1.6"/><path d="M11.2 6.2 L13.6 3.8 M11.8 3.6 H13.8 V5.6" fill="none" stroke="#222" stroke-width="1"/></svg>
 <svg class="a" style="left:1377px;top:45px" width="11" height="11" viewBox="0 0 11 11"><path d="M0.8 0.8 L10.2 10.2 M10.2 0.8 L0.8 10.2" stroke="#222" stroke-width="1.5"/></svg>
 <div class="a" style="left:1023px;top:70px;width:376px;height:1px;background:#ebebeb"></div>
 <svg class="a" style="left:1038px;top:84px" width="16" height="16" viewBox="0 0 16 16"><path d="M5 1.5 L1.5 5 L5 8.5 M1.5 5 H9.5 Q14.5 5 14.5 9.5 Q14.5 14.3 9.5 14.3 H4" fill="none" stroke="#222" stroke-width="1.6"/></svg>
 <svg class="a" style="left:1081px;top:84px" width="16" height="16" viewBox="0 0 16 16"><path d="M11 1.5 L14.5 5 L11 8.5 M14.5 5 H6.5 Q1.5 5 1.5 9.5 Q1.5 14.3 6.5 14.3 H12" fill="none" stroke="#c2c2c2" stroke-width="1.6"/></svg>
 <svg class="a" style="left:1163px;top:85px" width="13" height="17" viewBox="0 0 13 17"><path d="M2.6 2.8 Q4 0.9 6.3 0.9 Q9.3 0.9 9.3 4 V10.5 M9.3 5.8 Q6 5.6 4 6.3 Q1.6 7.2 1.7 8.7 Q1.9 10.6 4.3 10.5 Q7.6 10.4 9.3 7.6" fill="none" stroke="#ec4fc0" stroke-width="1.6" stroke-linecap="round"/><path d="M0.8 14 Q2 13 3 14.5 Q4 15.8 5.5 14.3 Q6.8 13 8 14.5 Q9 15.8 10.5 14.3 Q11.5 13.3 12 13.8" fill="none" stroke="#ec4fc0" stroke-width="1.3" stroke-linecap="round"/></svg>
 <svg class="a" style="left:1205px;top:85.5px" width="15" height="15" viewBox="0 0 15 15"><path d="M1.2 3.2 Q6 3.4 10.3 2.2 M5.5 0.8 Q5 7 7.3 13.8 M9.8 5.3 Q8.5 10.5 4.6 12.3 Q1.6 13.3 1.5 11 Q1.5 7.3 7.5 6.9 Q13.6 6.9 13.6 10.5 Q13.6 13 10.8 14" fill="none" stroke="#ec4fc0" stroke-width="1.6" stroke-linecap="round"/></svg>
 <div class="a" style="left:1226px;top:72px;width:60px;height:41px;border:6px solid #ffc800;background:#fff"></div>
 <div class="a" style="left:1238px;top:80px;width:36px;height:26px;background:#e0e0e0;border-radius:8px"></div>
 <svg class="a" style="left:1247px;top:84px" width="18" height="17" viewBox="0 0 18 17"><path d="M6.5 1.6 Q7 5.8 10.8 6.4 Q7 7 6.5 11.2 Q6 7 2.2 6.4 Q6 5.8 6.5 1.6Z" fill="#e64fc8"/><path d="M13.3 6.3 Q13.6 8.8 16 9.2 Q13.6 9.6 13.3 12.1 Q13 9.6 10.6 9.2 Q13 8.8 13.3 6.3Z" fill="#ee4fb5"/><path d="M9.2 10.6 Q9.5 12.8 11.5 13.3 Q9.5 13.8 9.2 15.9 Q8.9 13.8 6.9 13.3 Q8.9 12.8 9.2 10.6Z" fill="#ee4fb5"/></svg>
 <svg class="a" style="left:1371px;top:84.5px" width="17" height="17" viewBox="0 0 17 17"><rect x="1.9" y="6.6" width="9.6" height="9.4" rx="3" fill="none" stroke="#1a1a1a" stroke-width="1.9"/><rect x="6.3" y="1.9" width="9.4" height="9.4" rx="3" fill="#fff" stroke="#1a1a1a" stroke-width="1.9"/></svg>
 <div class="t" style="left:1045.3px;top:138.8px;font-size:14.4px;color:#1f1f1f">У Шляпника все хорошо у остальных кажется</div>
 <div class="t" style="left:1045.3px;top:160.8px;font-size:14.4px;color:#1f1f1f">тоже. Передавай всем большой привет!</div>
 <!-- popup -->
 <div class="a" style="left:1165px;top:119px;width:182px;height:260px;background:#fff;border-radius:8px;box-shadow:0 0 0 1px rgba(0,0,0,.045),0 1px 3px rgba(0,0,0,.08),0 5px 18px rgba(0,0,0,.11)"></div>
 <svg class="a" style="left:1246px;top:111px" width="20" height="10" viewBox="0 0 20 10"><path d="M0 9 Q5 9 8 4 Q10 1 12 4 Q15 9 20 9 V10 H0Z" fill="#fff"/><path d="M0 8.5 Q5 8.5 8 4 Q10 1 12 4 Q15 8.5 20 8.5" fill="none" stroke="rgba(0,0,0,.08)" stroke-width="1"/></svg>
 <div style="font-size:13.1px;color:#1f1f1f">
  <div class="t" style="left:1179.6px;top:134.9px">Красиво</div>
  <div class="t" style="left:1179.6px;top:163.7px">Другими словами</div>
  <div class="t" style="left:1179.6px;top:192.4px">Кратко</div>
  <div class="t" style="left:1179.6px;top:220.9px">Проще</div>
  <div class="t" style="left:1179.6px;top:250.4px">Сложнее</div>
  <div class="a" style="left:1179.6px;top:280px;width:167.4px;height:1px;background:#e8e8e8"></div>
  <div class="t" style="left:1179.6px;top:294.2px;font-size:12px;color:#999">Изменить стиль</div>
  <div class="t" style="left:1179.6px;top:320.9px">Более формально</div>
  <div class="t" style="left:1179.6px;top:349.9px">В разговорном стиле</div>
 </div>
 <!-- bottom -->
 <svg class="a" style="left:1047px;top:667px" width="12" height="12" viewBox="0 0 12 12"><path d="M10.5 0.5 V4.5 Q10.5 9.5 5 9.5 H1.5 M4.5 6.5 L1.5 9.5 L4.5 12" fill="none" stroke="#222" stroke-width="1.5"/></svg>
 <div class="t" style="left:1067px;top:666.9px;font-size:12.7px;color:#1f1f1f">Вставить на страницу</div>
 <div class="a" style="left:1045px;top:693px;width:334px;height:36px;border:1px solid #f8d6f1;border-radius:12px;background:#fff"></div>
 <div class="t" style="left:1062.4px;top:704.4px;font-size:14.4px;color:#9a9a9a">Помочь с текстом</div>
 <svg class="a" style="left:1350px;top:705px" width="19" height="13" viewBox="0 0 19 13"><path d="M0.5 6.5 H17.5 M11.5 0.8 L17.5 6.5 L11.5 12.2" fill="none" stroke="#a0a0a0" stroke-width="1.4"/></svg>
</div>
</body></html>
